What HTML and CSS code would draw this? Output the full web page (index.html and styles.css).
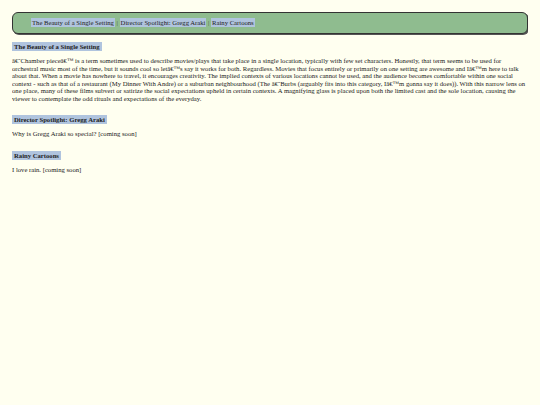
FILE: index.html
```html
<!DOCTYPE html>
<html lang="en">
<head>
    <meta charset="UTF-8">
    <title>Film Thoughts</title>
    <link rel="stylesheet" href="styles.css">
</head>

<body>
    <nav class="topnav">
        <a href="#beauty">The Beauty of a Single Setting</a> |
        <a href="#araki">Director Spotlight: Gregg Araki</a> |
        <a href="#rainy">Rainy Cartoons</a>
    </nav>

    <section id="beauty">
        <h2><span>The Beauty of a Single Setting</span></h2>
        <p>â€˜Chamber pieceâ€™ is a term sometimes used to describe movies/plays that take place in a single location, typically with few set characters. Honestly, that term seems to be used for orchestral music most of the time, but it sounds cool so letâ€™s say it works for both. Regardless. Movies that focus entirely or primarily on one setting are awesome and Iâ€™m here to talk about that. When a movie has nowhere to travel, it encourages creativity. The implied contexts of various locations cannot be used, and the audience becomes comfortable within one social context - such as that of a restaurant (My Dinner With Andre) or a suburban neighbourhood (The â€˜Burbs (arguably fits into this category, Iâ€™m gonna say it does)). With this narrow lens on one place, many of these films subvert or satirize the social expectations upheld in certain contexts. A magnifying glass is placed upon both the limited cast and the sole location, causing the viewer to contemplate the odd rituals and expectations of the everyday.</p>
    </section>

    <section id="araki">
        <h2><span>Director Spotlight: Gregg Araki</span></h2>
        <p>Why is Gregg Araki so special? [coming soon]</p>
    </section>

    <section id="rainy">
        <h2><span>Rainy Cartoons</span></h2>
        <p>I love rain. [coming soon]</p>
    </section>
</body>
</html>
```

FILE: styles.css
```css
body {
    background: #fffff0;
    font-family: "Liberation Serif", "Times New Roman", serif;
    font-size: 6.67px;
    color: #222;
    margin: 12px 12px;
}

.topnav {
    background: darkseagreen;
    border: 1px solid #333;
    border-radius: 6px;
    box-shadow: 1px 1px 0 #555;
    padding: 6px 18px;
    line-height: 8px;
    color: #444;
}

.topnav a {
    background: lightsteelblue;
    color: #222;
    text-decoration: none;
    padding: 1px 1px;
}

h2 {
    font-size: 6.67px;
    margin: 9px 0 7px;
}

h2 span {
    background: lightsteelblue;
    padding: 1px 2px;
}

p {
    line-height: 7.5px;
    margin: 0 0 14px;
}
```
